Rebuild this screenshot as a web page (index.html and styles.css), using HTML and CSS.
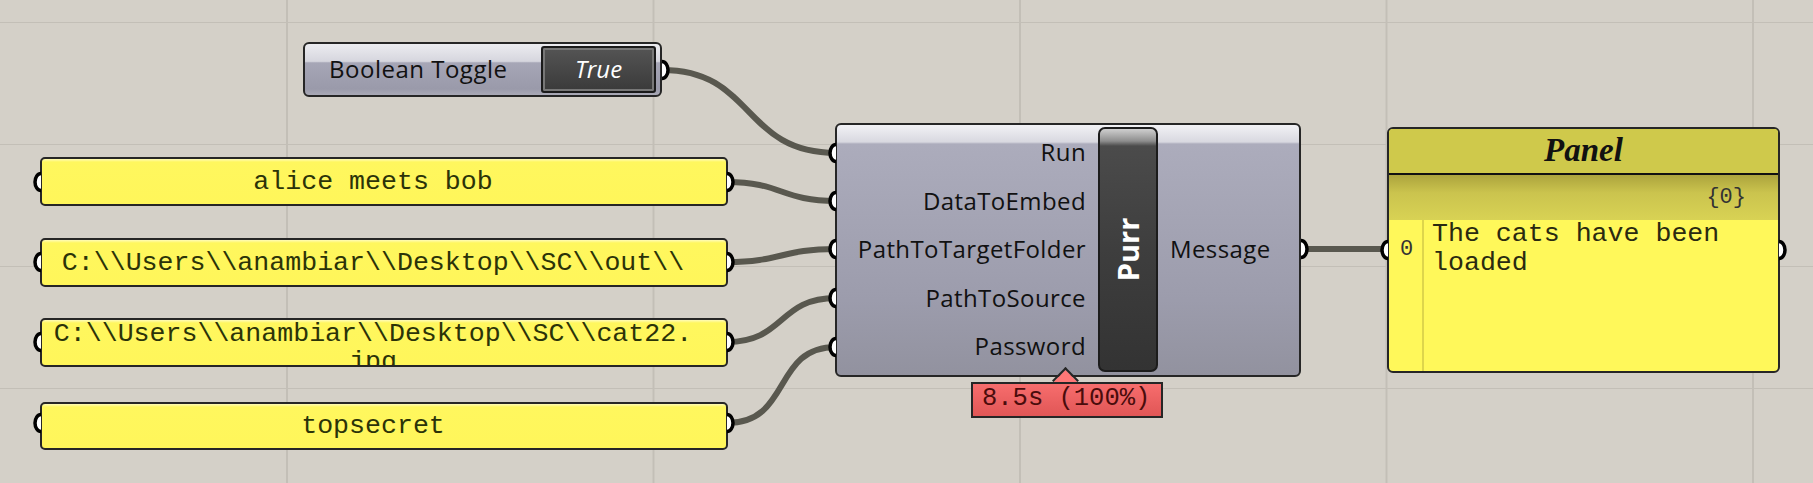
FILE: index.html
```html
<!DOCTYPE html>
<html>
<head>
<title>Purr - Grasshopper definition</title>
<link rel="stylesheet" href="styles.css">
</head>
<body>

  <div class="canvas">

    <!-- Boolean toggle -->
    <div class="node toggle">
      <span class="toggle-label">Boolean Toggle</span>
      <span class="toggle-value">True</span>
    </div>

    <!-- String panels -->
    <div class="node strpanel sp-1"><span class="strpanel-text">alice meets bob</span></div>
    <div class="node strpanel sp-2"><span class="strpanel-text">C:\\Users\\anambiar\\Desktop\\SC\\out\\</span></div>
    <div class="node strpanel sp-3 is-wrapped"><span class="strpanel-text">C:\\Users\\anambiar\\Desktop\\SC\\cat22.jpg</span></div>
    <div class="node strpanel sp-4"><span class="strpanel-text">topsecret</span></div>

    <!-- Purr component -->
    <div class="node comp">
      <div class="comp-inputs">
        <span>Run</span>
        <span>DataToEmbed</span>
        <span>PathToTargetFolder</span>
        <span>PathToSource</span>
        <span>Password</span>
      </div>
      <div class="comp-name"><span>Purr</span></div>
      <div class="comp-outputs">
        <span>Message</span>
      </div>
    </div>

    <div class="node timing">8.5s (100%)</div>

    <!-- Output panel -->
    <div class="node panel">
      <div class="panel-title">Panel</div>
      <div class="panel-body">
        <div class="panel-path"><span class="panel-idx"></span><span class="panel-branch">{0}</span></div>
        <div class="panel-item">
          <span class="panel-idx">0</span>
          <span class="panel-text">The cats have been loaded</span>
        </div>
      </div>
    </div>

    <!-- wires and grips -->
    <svg class="wires" width="1813" height="483" viewBox="0 0 1813 483">
      <g class="wire">
        <path d="M662 70 C 755 70, 742 153, 836 153"/>
        <path d="M727 182 C 782 182, 781 201, 836 201"/>
        <path d="M727 262 C 782 262, 781 249, 836 249"/>
        <path d="M727 342 C 785 342, 778 298, 836 298"/>
        <path d="M727 423 C 792 423, 772 347, 836 347"/>
        <path d="M1301 249 L 1388 249"/>
      </g>
      <g class="grip">
        <!-- outputs -->
        <path d="M662 61.5 A6 8.5 0 0 1 662 78.5"/>
        <path d="M727 173.5 A6 8.5 0 0 1 727 190.5"/>
        <path d="M727 253.5 A6 8.5 0 0 1 727 270.5"/>
        <path d="M727 333.5 A6 8.5 0 0 1 727 350.5"/>
        <path d="M727 414.5 A6 8.5 0 0 1 727 431.5"/>
        <path d="M1301 240.5 A6 8.5 0 0 1 1301 257.5"/>
        <path d="M1779 241.5 A6 8.5 0 0 1 1779 258.5"/>
        <!-- inputs -->
        <path d="M41 173.5 A6 8.5 0 0 0 41 190.5"/>
        <path d="M41 253.5 A6 8.5 0 0 0 41 270.5"/>
        <path d="M41 333.5 A6 8.5 0 0 0 41 350.5"/>
        <path d="M41 414.5 A6 8.5 0 0 0 41 431.5"/>
        <path d="M836 144.5 A6 8.5 0 0 0 836 161.5"/>
        <path d="M836 192.5 A6 8.5 0 0 0 836 209.5"/>
        <path d="M836 240.5 A6 8.5 0 0 0 836 257.5"/>
        <path d="M836 289.5 A6 8.5 0 0 0 836 306.5"/>
        <path d="M836 338.5 A6 8.5 0 0 0 836 355.5"/>
        <path d="M1388 241.5 A6 8.5 0 0 0 1388 258.5"/>
      </g>
    </svg>

  </div>

</body>
</html>
```

FILE: styles.css
```css
/* Canvas */
html,
body {
  margin: 0;
  background: #d4d0c8;
}

.canvas {
  position: relative;
  width: 1813px;
  height: 483px;
  overflow: hidden;
  background-color: #d4d0c8;
  background-image:
    linear-gradient(90deg, #c3bfb7 2px, transparent 2px),
    linear-gradient(#c3bfb7 2px, transparent 2px);
  background-size: 366.5px 122px;
  background-position: 286px 21px;
  font-family: 'Open Sans', sans-serif;
  color: #111;
}

.node {
  position: absolute;
  box-sizing: border-box;
  border: 2px solid #262626;
  border-radius: 6px;
}

.wires {
  position: absolute;
  left: 0;
  top: 0;
  z-index: 2;
  pointer-events: none;
}

.wire path {
  fill: none;
  stroke: #59584f;
  stroke-width: 6;
}

.grip path {
  fill: #fff;
  stroke: #000;
  stroke-width: 3.5;
}

/* Boolean toggle */
.toggle {
  left: 303px;
  top: 42px;
  width: 359px;
  height: 55px;
  display: flex;
  align-items: center;
  padding: 0 4px 0 24px;
  background: linear-gradient(#ececf0 0, #d6d6de 34%, #a6a6b6 37%, #9a9aaa 88%, #a9a9b6 100%);
}

.toggle-label {
  flex: 1;
  font-size: 24px;
  letter-spacing: 0.5px;
  padding-bottom: 2px;
}

.toggle-value {
  box-sizing: border-box;
  width: 115px;
  height: 47px;
  display: flex;
  align-items: center;
  justify-content: center;
  border: 2px solid #1a1a1a;
  border-radius: 3px;
  box-shadow: inset 0 0 0 2px #777;
  background: linear-gradient(#545454, #3a3a3a);
  color: #fff;
  font-size: 24px;
  font-style: italic;
  padding-bottom: 2px;
}

/* String panels */
.strpanel {
  left: 40px;
  width: 688px;
  height: 49px;
  display: flex;
  align-items: center;
  justify-content: center;
  padding: 0 30px 0 8px;
  overflow: hidden;
  background: linear-gradient(#fffbb8 0, #fff75e 3px, #fff65a 100%);
  border-radius: 5px;
}

.strpanel-text {
  font-family: 'Liberation Mono', monospace;
  font-size: 26.6px;
  line-height: 28px;
  color: #2b3308;
  text-align: center;
  word-break: break-all;
}

.sp-1 { top: 157px; }
.sp-2 { top: 238px; }
.sp-3 { top: 318px; }
.sp-4 { top: 402px; height: 48px; }

.strpanel.is-wrapped {
  align-items: flex-start;
  padding-top: 0;
}

/* Purr component */
.comp {
  left: 835px;
  top: 123px;
  width: 466px;
  height: 254px;
  display: grid;
  grid-template-columns: 249px 60px 1fr;
  column-gap: 12px;
  background: linear-gradient(#f2f2f5 0, #d8d8e0 17px, #acacbc 19px, #9c9cac 70%, #92929f 100%);
}

.comp-inputs {
  display: flex;
  flex-direction: column;
  align-items: flex-end;
  padding-top: 4px;
}

.comp-inputs span,
.comp-outputs span {
  height: 48.5px;
  line-height: 46px;
  font-size: 24px;
  letter-spacing: 0.4px;
}

.comp-name {
  margin: 2px 0 3px;
  border: 2px solid #1c1c1c;
  border-radius: 7px;
  background: linear-gradient(#cfcfcf 0, #8e8e8e 12px, #4b4b4b 17px, #3e3e3e 50%, #333 100%);
  display: flex;
  align-items: center;
  justify-content: center;
}

.comp-name span {
  transform: rotate(-90deg);
  color: #fff;
  font-weight: bold;
  font-size: 29px;
  white-space: nowrap;
}

.comp-outputs {
  display: flex;
  align-items: center;
  padding-left: 0;
}

/* Profiler badge */
.timing {
  left: 971px;
  top: 382px;
  width: 192px;
  height: 36px;
  z-index: 1;
  border-radius: 0;
  background: linear-gradient(#f76d6d, #e05656);
  font-family: 'Liberation Mono', monospace;
  font-size: 25.5px;
  line-height: 30px;
  color: #4a0c0c;
  padding-left: 9px;
}

.timing::before {
  content: "";
  position: absolute;
  left: 83px;
  top: -13px;
  width: 17px;
  height: 17px;
  background: linear-gradient(135deg, #f77 50%, transparent 50%);
  border-top: 2px solid #262626;
  border-left: 2px solid #262626;
  transform: rotate(45deg);
}

/* Output panel */
.panel {
  left: 1387px;
  top: 127px;
  width: 393px;
  height: 246px;
  display: flex;
  flex-direction: column;
  overflow: hidden;
  background: #fff85a;
}

.panel-title {
  height: 44px;
  border-bottom: 2px solid #111;
  background: #cfc94b;
  text-align: center;
  font-family: 'Liberation Serif', serif;
  font-style: italic;
  font-weight: bold;
  font-size: 33px;
  line-height: 42px;
}

.panel-body {
  flex: 1;
  background: linear-gradient(90deg, transparent 33px, #ddd54c 33px, #ddd54c 35px, transparent 35px);
}

.panel-path {
  height: 45px;
  display: flex;
  align-items: center;
  justify-content: flex-end;
  padding-right: 32px;
  background: linear-gradient(#aca43d 0, #cbc44e 40%, #d8d254 100%);
}

.panel-path .panel-idx {
  display: none;
}

.panel-branch,
.panel-idx {
  font-family: 'Liberation Mono', monospace;
  font-size: 22px;
  color: #333;
}

.panel-item {
  display: flex;
  align-items: center;
}

.panel-idx {
  width: 35px;
  text-align: center;
  flex: none;
}

.panel-text {
  flex: 1;
  padding-left: 8px;
  font-family: 'Liberation Mono', monospace;
  font-size: 26.6px;
  line-height: 29px;
  color: #2a2a10;
}
```
